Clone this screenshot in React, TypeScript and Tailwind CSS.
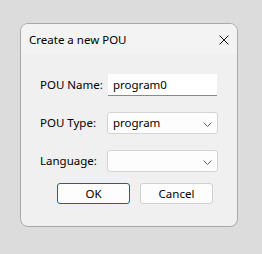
import React from "react";

const Chevron = () => (
  <svg width="9" height="5" viewBox="0 0 9 5" className="absolute right-[5px] top-[9px]">
    <path d="M0.5 0.5 L4.5 4.5 L8.5 0.5" fill="none" stroke="#5f5f5f" strokeWidth="1" />
  </svg>
);

const Select = ({ value }: { value: string }) => (
  <div className="relative w-[111px] h-[22px] bg-[#fdfdfd] border border-[#d4d4d4] rounded-[3px] pl-[5px] text-[11.5px] leading-[20px] text-black">
    {value}
    <Chevron />
  </div>
);

export default function App() {
  return (
    <div
      className="w-[262px] h-[254px] bg-[#dcdcdc] pt-[23px] pl-[20px]"
      style={{ fontFamily: '"Noto Sans", "Open Sans", sans-serif' }}
    >
      <div className="w-[218px] h-[204px] rounded-[8px] border border-[#a9a9a9] bg-[#f0f0f0] overflow-hidden flex flex-col">
        <div className="h-[30px] bg-[#f3f3f3] flex items-center justify-between pl-[8px] pr-[8px] pt-[1px]">
          <span className="text-[11.5px] text-black">Create a new POU</span>
          <svg width="10" height="10" viewBox="0 0 10 10">
            <path d="M0.5 0.5 L9.5 9.5 M9.5 0.5 L0.5 9.5" stroke="#1a1a1a" strokeWidth="1" />
          </svg>
        </div>
        <div className="flex flex-col gap-[16px] pt-[20px] pl-[19px] text-[11.5px] text-black">
          <div className="flex items-center">
            <span className="w-[68px]">POU Name:</span>
            <div className="w-[109px] h-[22px] bg-white border-b border-[#8a8a8a] pl-[5px] leading-[21px]">
              program0
            </div>
          </div>
          <div className="flex items-center">
            <span className="w-[67px]">POU Type:</span>
            <Select value="program" />
          </div>
          <div className="flex items-center">
            <span className="w-[67px]">Language:</span>
            <Select value="" />
          </div>
        </div>
        <div className="flex gap-[10px] pl-[36px] mt-[11px] text-[11.5px] text-black">
          <button className="w-[73px] h-[21px] rounded-[3px] border border-[#0067c0] bg-[#fdfdfd] leading-[19px]">
            OK
          </button>
          <button className="w-[73px] h-[21px] rounded-[3px] border border-[#d0d0d0] bg-[#fdfdfd] leading-[19px]">
            Cancel
          </button>
        </div>
      </div>
    </div>
  );
}
